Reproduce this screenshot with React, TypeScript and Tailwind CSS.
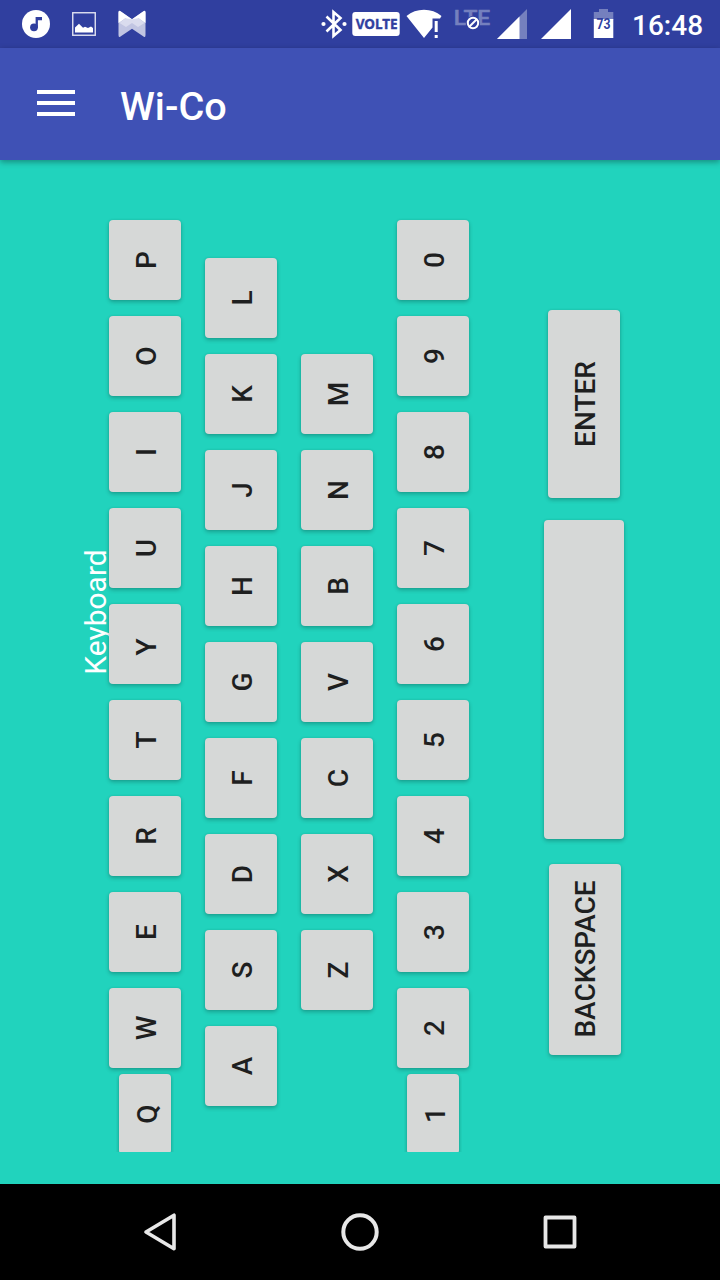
import React from "react";

const KEY =
  "flex shrink-0 items-center justify-center rounded-[4px] bg-[#d6d8d7] font-medium text-[28px] leading-none text-[#1e1f1f] shadow-[0_2px_4px_rgba(0,0,0,0.24),0_0_2px_rgba(0,0,0,0.1)]";

function Key({
  label,
  size = "h-20 w-[72px]",
  nudge = "pl-1",
}: {
  label: string;
  size?: string;
  nudge?: string;
}) {
  return (
    <button type="button" className={`${KEY} ${size} ${nudge}`}>
      <span className="block -rotate-90 whitespace-nowrap">{label}</span>
    </button>
  );
}

function KeyColumn({ keys, last, className }: { keys: string; last?: string; className: string }) {
  return (
    <div className={`flex w-[72px] shrink-0 flex-col items-center ${className}`}>
      <div className="flex flex-col gap-4">
        {keys.split("").map((k) => (
          <Key key={k} label={k} nudge={k === "Y" ? "pl-1 pt-1.5" : "pl-1"} />
        ))}
      </div>
      {last && (
        <div className="flex h-[84px] w-[58px] shrink-0 justify-center overflow-hidden pt-1.5">
          <Key label={last} size="h-20 w-[52px]" nudge={last === "Q" ? "pl-1.5" : "pl-1.5 pt-0.5"} />
        </div>
      )}
    </div>
  );
}

function StatusBar() {
  return (
    <header className="flex h-12 shrink-0 items-center bg-[#303f9f] text-white">
      <svg className="ml-[22px] shrink-0" width="28" height="28" viewBox="0 0 28 28">
        <circle cx="14" cy="14" r="14" fill="#fff" />
        <circle cx="12" cy="17.3" r="3.9" fill="#303f9f" />
        <path d="M13.6 7H20v3.2h-4.1v7.3h-2.3z" fill="#303f9f" />
      </svg>
      <svg className="ml-[22px] shrink-0" width="24" height="24" viewBox="0 0 24 24">
        <rect x="0.75" y="0.75" width="22.5" height="22.5" fill="none" stroke="#e0e2f1" strokeWidth="1.4" />
        <path d="M3 20.5v-5l4-3.7 4 4 2-1 3 1.2 3-1.5 2 1.5v4.5z" fill="#fff" />
      </svg>
      <svg className="ml-[22px] shrink-0" width="28" height="28" viewBox="0 0 28 28">
        <path d="M0.5 2.5Q0.5 0 2.5 1.2L14 9.2 25.5 1.2Q27.5 0 27.5 2.5V25Q27.5 28 25.5 26.4L14 18.8 2.5 26.4Q0.5 28 0.5 25z" fill="#c1c5e2" />
        <path d="M0.5 2.5Q0.5 0 2.5 1.2L14 9.2 25.5 1.2Q27.5 0 27.5 2.5V13L20.7 8.3 14 12.5 7.3 8.3 0.5 13z" fill="#fff" />
        <path d="M7.3 8.3L14 9.2 20.7 8.3 26.5 13 20 17 14 13 8 17 1.5 13z" fill="#dadcee" />
      </svg>
      <svg className="ml-[175px] shrink-0" width="26" height="30" viewBox="0 0 26 30">
        <path d="M5.5 7.5L19.5 21 12.5 27V3l7 6L5.5 22.5" fill="none" stroke="#fff" strokeWidth="2.6" />
        <circle cx="2.5" cy="15" r="2.1" fill="#fff" />
        <circle cx="23.5" cy="15" r="2.1" fill="#fff" />
      </svg>
      <svg className="ml-[5px] shrink-0" width="48" height="24" viewBox="0 0 48 24">
        <rect x="0.3" y="0" width="47.4" height="24" rx="3" fill="#fff" />
        <text x="3.7" y="17.3" textLength="42" lengthAdjust="spacingAndGlyphs" className="fill-[#303f9f] stroke-[#303f9f] stroke-[0.4px] font-['Noto_Sans',sans-serif] text-[14.5px] font-bold">VOLTE</text>
      </svg>
      <svg className="ml-[6px] shrink-0" width="36" height="30" viewBox="0 0 36 30">
        <path d="M0.5 7Q8 0.8 18 0.8T35.5 7L34 9.5H26.5V18.5L18 29z" fill="#fff" />
        <path d="M28.7 12h3v11h-3zM28.7 26h3v3h-3z" fill="#fff" />
      </svg>
      <svg className="ml-[11px] shrink-0 overflow-visible" width="40" height="30" viewBox="0 0 40 30">
        <text x="0.8" y="16" textLength="36.5" lengthAdjust="spacingAndGlyphs" className="fill-[#7580be] stroke-[#7580be] stroke-[0.5px] font-['Roboto',sans-serif] text-[21px] font-medium">LTE</text>
        <circle cx="20" cy="14" r="7" fill="#303f9f" />
        <circle cx="20" cy="14" r="5.2" fill="none" stroke="#fff" strokeWidth="2" />
        <path d="M16.5 17.5l7-7" stroke="#fff" strokeWidth="2" />
      </svg>
      <svg className="ml-1 shrink-0" width="30" height="30" viewBox="0 0 30 30">
        <path d="M30 0V30H0z" fill="#7580be" />
        <path d="M22.5 7.5V30H0z" fill="#fff" />
      </svg>
      <svg className="ml-[14px] shrink-0" width="30" height="30" viewBox="0 0 30 30">
        <path d="M30 0V30H0z" fill="#fff" />
      </svg>
      <svg className="ml-[22px] shrink-0" width="21" height="30" viewBox="0 0 21 30">
        <path d="M6 0h9v3h5.3v8H0.8V3H6z" fill="#7580be" />
        <path d="M0.8 10h19.5v19H0.8z" fill="#fff" />
        <text x="3.4" y="20" textLength="14" lengthAdjust="spacingAndGlyphs" className="fill-[#303f9f] font-['Roboto',sans-serif] text-[15px] font-bold">73</text>
      </svg>
      <span className="ml-[18px] mt-[3px] text-[28px] font-medium leading-none">16:48</span>
    </header>
  );
}

export default function App() {
  return (
    <div className="flex h-[1280px] w-[720px] flex-col overflow-hidden bg-[#21d3bd] font-['Roboto',sans-serif]">
      <StatusBar />
      <div className="z-10 flex h-28 shrink-0 items-center bg-[#3f51b5] text-white shadow-[0_2px_6px_rgba(0,0,0,0.34)]">
        <button type="button" aria-label="Menu" className="mb-[2px] ml-[37px] flex h-[26px] w-[38px] flex-col justify-between">
          <span className="h-1 w-full bg-white" />
          <span className="h-1 w-full bg-white" />
          <span className="h-1 w-full bg-white" />
        </button>
        <h1 className="ml-[45px] mt-[6px] text-[39.6px] font-medium leading-none">Wi-Co</h1>
      </div>
      <main className="flex flex-1 items-start">
        <div className="ml-[82px] mt-[388px] flex h-32 w-[27px] shrink-0 items-center justify-center">
          <span className="block -rotate-90 whitespace-nowrap text-[30px] leading-none text-white">Keyboard</span>
        </div>
        <KeyColumn keys="POIUYTREW" last="Q" className="relative mt-[60px]" />
        <KeyColumn keys="LKJHGFDSA" className="ml-6 mt-[98px]" />
        <KeyColumn keys="MNBVCXZ" className="ml-6 mt-[194px]" />
        <KeyColumn keys="098765432" last="1" className="ml-6 mt-[60px]" />
        <div className="ml-[75px] mt-[150px] flex w-20 shrink-0 flex-col items-center">
          <Key label="ENTER" size="h-[188px] w-[72px]" />
          <div className="mt-[22px]">
            <Key label="" size="h-[319px] w-20" />
          </div>
          <div className="ml-px mt-[25px]">
            <Key label="BACKSPACE" size="h-[190.5px] w-[72px]" nudge="pl-[3px]" />
          </div>
        </div>
      </main>
      <nav className="flex h-24 shrink-0 items-center justify-center gap-[160px] bg-black">
        <svg width="40" height="40" viewBox="0 0 40 40" fill="none" stroke="#e8e8e8" strokeWidth="3.6" strokeLinejoin="round">
          <path d="M34 3.2V36.8L6 20z" />
        </svg>
        <svg width="40" height="40" viewBox="0 0 40 40" fill="none" stroke="#e8e8e8" strokeWidth="4">
          <circle cx="20" cy="20" r="16.7" />
        </svg>
        <svg width="40" height="40" viewBox="0 0 40 40" fill="none" stroke="#e8e8e8" strokeWidth="3.8" strokeLinejoin="round">
          <rect x="5.5" y="5.5" width="29" height="29" />
        </svg>
      </nav>
    </div>
  );
}
